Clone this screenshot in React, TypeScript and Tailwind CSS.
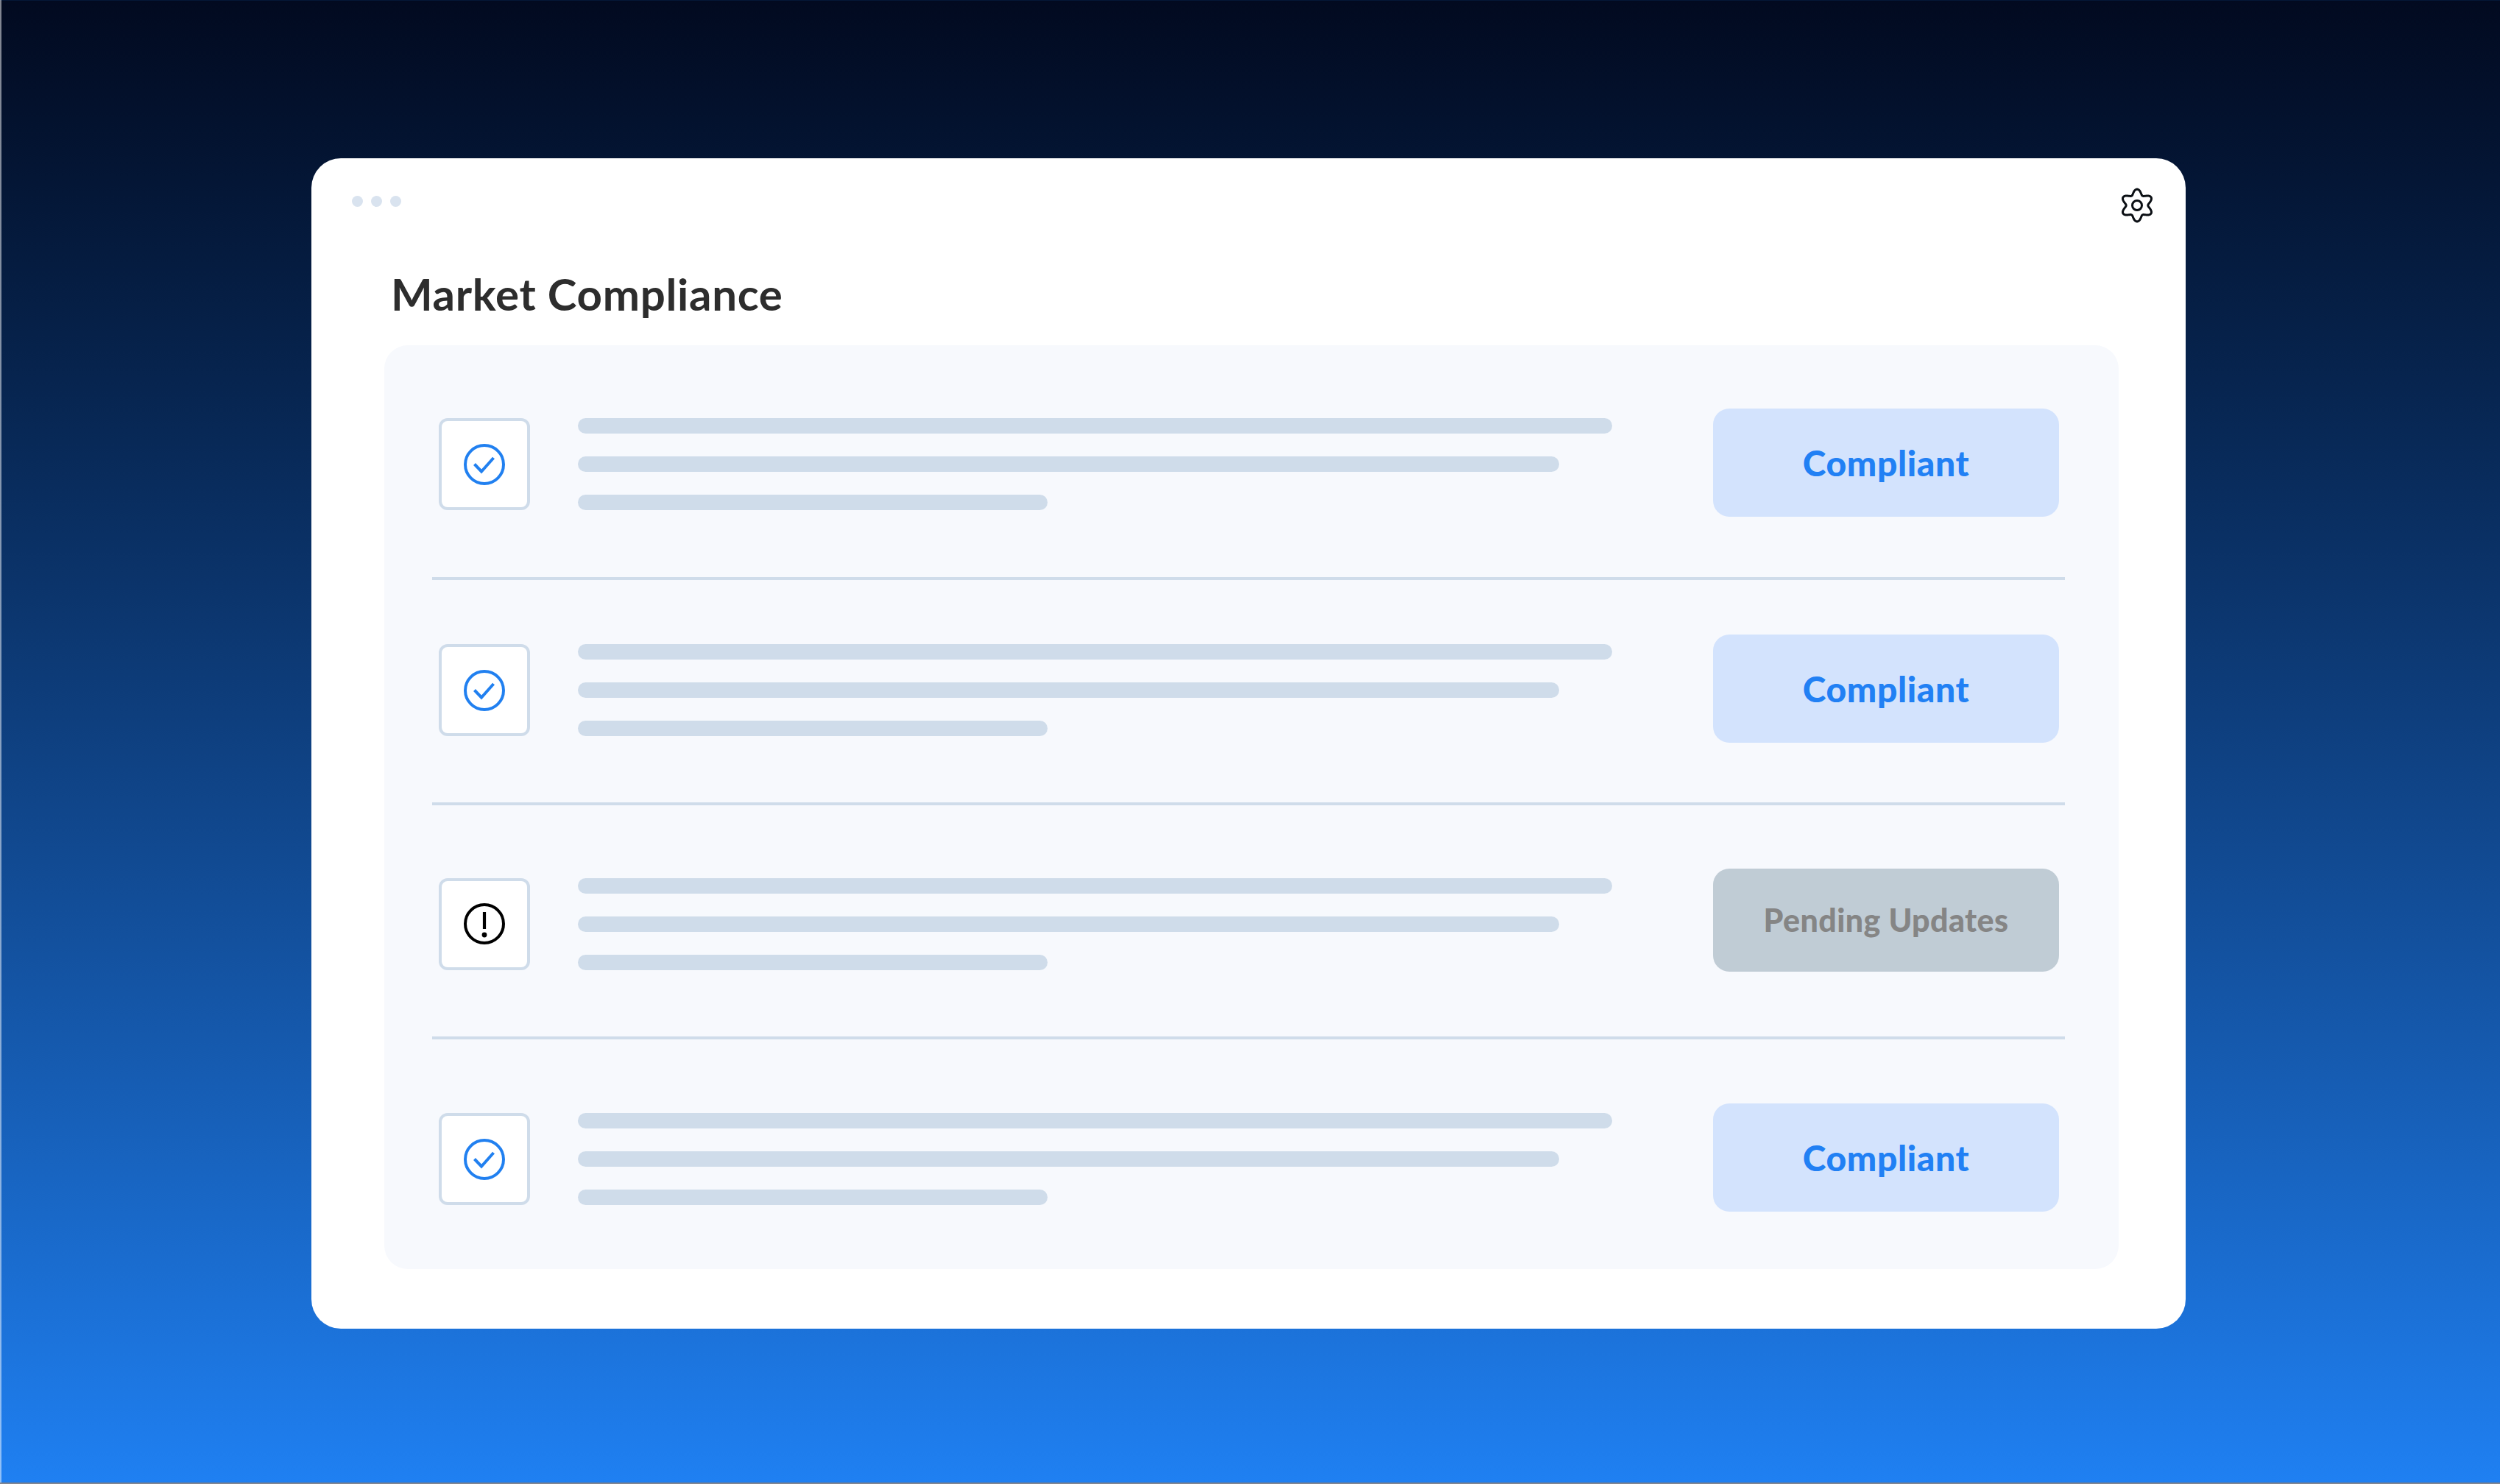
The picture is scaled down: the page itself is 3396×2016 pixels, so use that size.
const rows = [
  { ok: true, rowClass: "pt-[86px] pb-[78px]", badgeClass: "h-[147px] mb-[4px]" },
  { ok: true, rowClass: "pt-[74px] pb-[77px]", badgeClass: "h-[147px] mb-[4px]" },
  { ok: false, rowClass: "pt-[86px] pb-[78px]", badgeClass: "h-[140px] mb-[10px]" },
  { ok: true, rowClass: "pt-[87px] pb-[74px]", badgeClass: "h-[147px] mb-[4px]" },
];

// six lobed cog outline, sampled from a polar curve
function cogPath() {
  const points: string[] = [];
  for (let i = 0; i < 120; i++) {
    const t = (i / 120) * Math.PI * 2;
    const r = 18.4 + 3.6 * Math.cos(6 * t);
    const x = 25 + r * Math.sin(t);
    const y = 25 - r * Math.cos(t);
    points.push(`${x.toFixed(2)} ${y.toFixed(2)}`);
  }
  return `M${points.join("L")}Z`;
}

function CheckIcon() {
  return (
    <svg width="60" height="60" viewBox="0 0 60 60" fill="none" stroke="#2180f0" strokeWidth="4">
      <circle cx="30" cy="30" r="26" />
      <path d="M16.5 29.5 L26 39.5 L42.5 21" strokeLinejoin="miter" />
    </svg>
  );
}

function AlertIcon() {
  return (
    <svg width="60" height="60" viewBox="0 0 60 60" fill="none" stroke="#000000" strokeWidth="4">
      <circle cx="30" cy="30" r="26" />
      <path d="M30 14 V37" strokeWidth="4.2" />
      <circle cx="30" cy="45" r="3.4" fill="#000000" stroke="none" />
    </svg>
  );
}

function Row({ ok, rowClass, badgeClass }: { ok: boolean; rowClass: string; badgeClass: string }) {
  return (
    <div className={`flex items-center pl-[9px] pr-[8px] ${rowClass}`}>
      <div className="flex h-[125px] w-[124px] shrink-0 items-center justify-center rounded-[12px] border-[4px] border-[#cfdcea] bg-white">
        {ok ? <CheckIcon /> : <AlertIcon />}
      </div>
      <div className="ml-[65px] flex flex-col gap-[31px]">
        <div className="h-[21px] w-[1405px] rounded-full bg-[#cfdcea]" />
        <div className="h-[21px] w-[1333px] rounded-full bg-[#cfdcea]" />
        <div className="h-[21px] w-[638px] rounded-full bg-[#cfdcea]" />
      </div>
      {ok ? (
        <div className={`ml-auto flex w-[470px] items-center justify-center rounded-[22px] bg-[#d3e3fd] text-[48px] font-black tracking-[0.6px] text-[#2180f4] ${badgeClass}`}>
          Compliant
        </div>
      ) : (
        <div className={`ml-auto flex w-[470px] items-center justify-center rounded-[22px] bg-[#c0ccd5] text-[43px] font-black tracking-[0.4px] text-[#858585] ${badgeClass}`}>
          Pending Updates
        </div>
      )}
    </div>
  );
}

export default function App() {
  return (
    <div className="h-[2016px] w-[3396px] overflow-hidden border-b-[2px] border-l-[2px] border-white/50 bg-linear-to-b from-[#020a20] to-[#1f80f2] pl-[421px] pt-[215px] font-['Lato',sans-serif]">
      <div className="flex h-[1590px] w-[2546px] flex-col rounded-[40px] bg-white">
        <div className="flex justify-between pl-[55px] pr-[41px] pt-[39px]">
          <div className="mt-[12px] flex gap-[11px]">
            <div className="h-[15px] w-[15px] rounded-full bg-[#d9e3ef]" />
            <div className="h-[15px] w-[15px] rounded-full bg-[#d9e3ef]" />
            <div className="h-[15px] w-[15px] rounded-full bg-[#d9e3ef]" />
          </div>
          <svg width="50" height="50" viewBox="0 0 50 50" fill="none" stroke="#0b0f14" strokeWidth="3">
            <path d={cogPath()} strokeLinejoin="round" />
            <circle cx="25" cy="25" r="6.5" />
          </svg>
        </div>
        <h1 className="ml-[108px] mt-[60px] text-[60px] font-bold leading-[70px] tracking-[0.7px] text-[#2d2d2d]">
          Market Compliance
        </h1>
        <div className="ml-[99px] mt-[35px] w-[2356px] rounded-[32px] bg-[#f7f9fd] pl-[65px] pr-[73px]">
          {rows.map((row, i) => (
            <div key={i}>
              <Row ok={row.ok} rowClass={row.rowClass} badgeClass={row.badgeClass} />
              {i < rows.length - 1 && <div className="h-[4px] bg-[#cfdcea]" />}
            </div>
          ))}
        </div>
      </div>
    </div>
  );
}
